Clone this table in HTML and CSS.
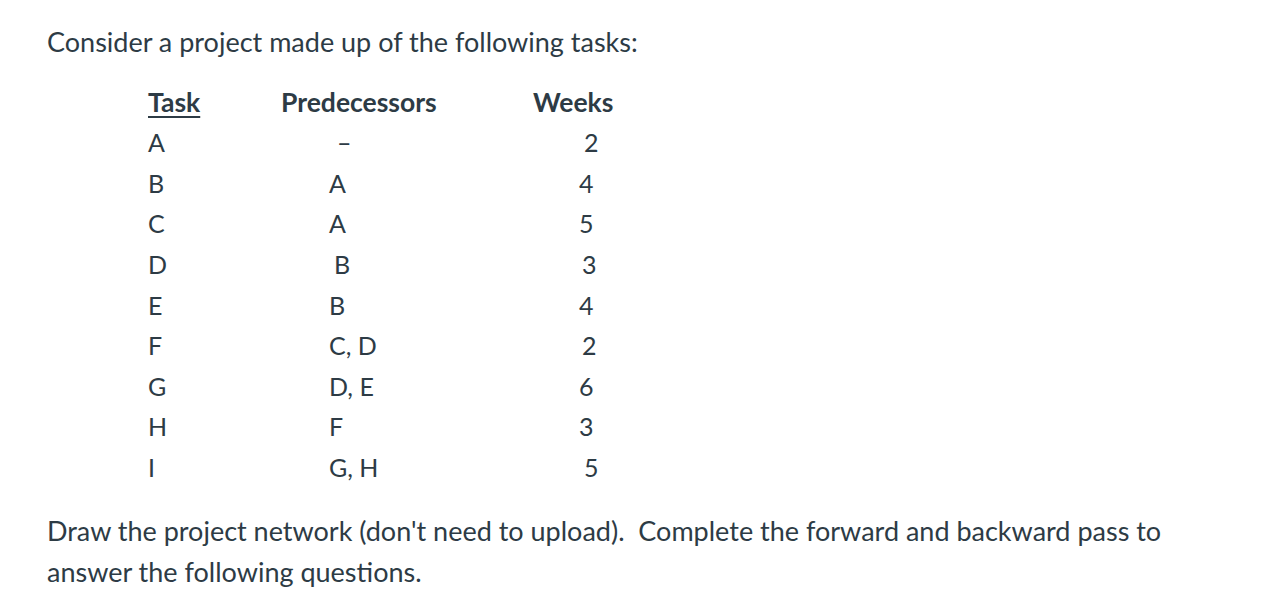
FILE: index.html
```html
<!DOCTYPE html>
<html>
<head>
<meta charset="utf-8">
<link rel="stylesheet" href="styles.css">
</head>
<body>
<div class="page">
  <p class="intro">Consider a project made up of the following tasks:</p>
  <div class="table">
    <div class="row head">
      <div class="c1 u">Task</div>
      <div class="c2">Predecessors</div>
      <div class="c3">Weeks</div>
    </div>
    <div class="row"><div class="c1">A</div><div class="c2 v dash">–</div><div class="c3 v w2">2</div></div>
    <div class="row"><div class="c1">B</div><div class="c2 v">A</div><div class="c3 v">4</div></div>
    <div class="row"><div class="c1">C</div><div class="c2 v">A</div><div class="c3 v">5</div></div>
    <div class="row"><div class="c1">D</div><div class="c2 v b">B</div><div class="c3 v w3">3</div></div>
    <div class="row"><div class="c1">E</div><div class="c2 v">B</div><div class="c3 v">4</div></div>
    <div class="row"><div class="c1">F</div><div class="c2 v">C, D</div><div class="c3 v w3">2</div></div>
    <div class="row"><div class="c1">G</div><div class="c2 v">D, E</div><div class="c3 v">6</div></div>
    <div class="row"><div class="c1">H</div><div class="c2 v">F</div><div class="c3 v">3</div></div>
    <div class="row"><div class="c1">I</div><div class="c2 v">G, H</div><div class="c3 v w2">5</div></div>
  </div>
  <p class="para">Draw the project network (don't need to upload).&nbsp; Complete the forward and backward pass to answer the following questions.</p>
</div>
</body>
</html>
```
FILE: styles.css
```css
html, body {
  margin: 0;
  padding: 0;
  background: #ffffff;
}
.page {
  padding: 21px 0 0 47px;
  width: 1125px;
  color: #2d3b45;
  font-family: Lato, "Liberation Sans", sans-serif;
}
.intro {
  margin: 0;
  font-size: 27px;
  line-height: 41px;
}
.table {
  margin: 20px 0 0 101px;
  font-size: 25px;
}
.row {
  display: grid;
  grid-template-columns: 133px 252px 100px;
  height: 40.6px;
  align-items: center;
}
.head {
  font-weight: bold;
  font-size: 26.5px;
  height: 40px;
}
.u {
  text-decoration: underline;
  text-underline-offset: 4px;
  text-decoration-thickness: 2px;
}
.c2.v { padding-left: 48px; }
.c2.dash { padding-left: 56px; }
.c2.b { padding-left: 53px; }
.c3.v { padding-left: 46px; }
.c3.w2 { padding-left: 51px; }
.c3.w3 { padding-left: 49px; }
.para {
  margin: 23px 0 0;
  font-size: 27px;
  line-height: 41px;
}
```
